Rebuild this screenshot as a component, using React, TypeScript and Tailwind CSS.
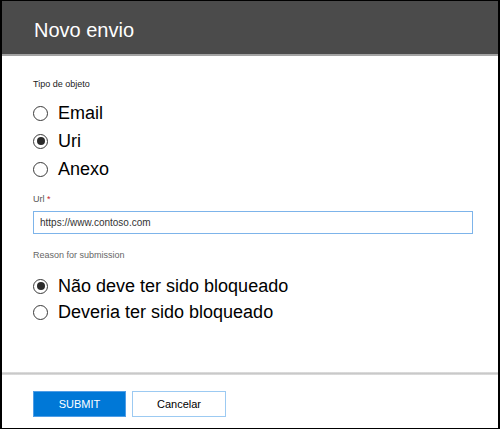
import { useState } from 'react'

const font = { fontFamily: '"Liberation Sans", Arial, sans-serif' }

function Radio({ label, checked, onSelect }: { label: string; checked: boolean; onSelect: () => void }) {
  return (
    <button
      type="button"
      onClick={onSelect}
      className="flex items-center gap-[10px] text-left"
    >
      <span className="flex h-[15px] w-[15px] flex-shrink-0 items-center justify-center rounded-full border-[1.5px] border-[#3a3a3a]">
        {checked && <span className="h-[8px] w-[8px] rounded-full bg-[#2b2b2b]" />}
      </span>
      <span className="text-[18px] leading-none text-black">{label}</span>
    </button>
  )
}

export default function App() {
  const [kind, setKind] = useState('uri')
  const [reason, setReason] = useState('fp')
  const [url, setUrl] = useState('https://www.contoso.com')

  return (
    <div
      style={font}
      className="flex h-[429px] w-[500px] flex-col border-x-2 border-t border-b border-black bg-white"
    >
      {/* Header */}
      <div className="flex h-[53px] flex-shrink-0 items-center bg-[#4b4b4b] pl-[32px] pt-[5px]">
        <span className="text-[20px] text-white">Novo envio</span>
      </div>
      <div className="h-[2px] flex-shrink-0 bg-[#a3a3a3]" />

      {/* Body */}
      <div className="flex flex-1 flex-col pl-[31px]">
        <div className="mt-[22px] h-[12px] text-[9px] leading-[12px] text-[#222]">Tipo de objeto</div>
        <div className="mt-[9px] flex flex-col">
          {[
            { id: 'email', label: 'Email' },
            { id: 'uri', label: 'Uri' },
            { id: 'anexo', label: 'Anexo' },
          ].map((o) => (
            <div key={o.id} className="flex h-[28px] items-center">
              <Radio label={o.label} checked={kind === o.id} onSelect={() => setKind(o.id)} />
            </div>
          ))}
        </div>

        <div className="mt-[10px] h-[12px] text-[9px] leading-[12px] text-[#555]">
          Url <span className="text-[#c4262e]">*</span>
        </div>
        <input
          value={url}
          onChange={(e) => setUrl(e.target.value)}
          style={font}
          className="mt-[6px] h-[23px] w-[440px] border border-[#7db4ea] px-[6px] text-[10px] text-[#333] outline-none"
        />

        <div className="mt-[15px] h-[12px] text-[9px] leading-[12px] text-[#666]">Reason for submission</div>
        <div className="mt-[12px] flex flex-col">
          {[
            { id: 'fp', label: 'Não deve ter sido bloqueado' },
            { id: 'fn', label: 'Deveria ter sido bloqueado' },
          ].map((o) => (
            <div key={o.id} className="flex h-[26px] items-center">
              <Radio label={o.label} checked={reason === o.id} onSelect={() => setReason(o.id)} />
            </div>
          ))}
        </div>
      </div>

      {/* Footer */}
      <div className="h-[3px] flex-shrink-0 bg-gradient-to-b from-[#e2e2e2] via-[#c9c9c9] to-[#e2e2e2]" />
      <div className="flex h-[53px] flex-shrink-0 items-start gap-[6px] pl-[31px] pt-[16px]">
        <button
          type="button"
          className="h-[26px] w-[93px] border border-[#4f9de6] bg-[#0078d7] text-[11px] text-white"
        >
          SUBMIT
        </button>
        <button
          type="button"
          className="h-[26px] w-[94px] border border-[#9ccaf2] bg-white text-[11px] text-black"
        >
          Cancelar
        </button>
      </div>
    </div>
  )
}
